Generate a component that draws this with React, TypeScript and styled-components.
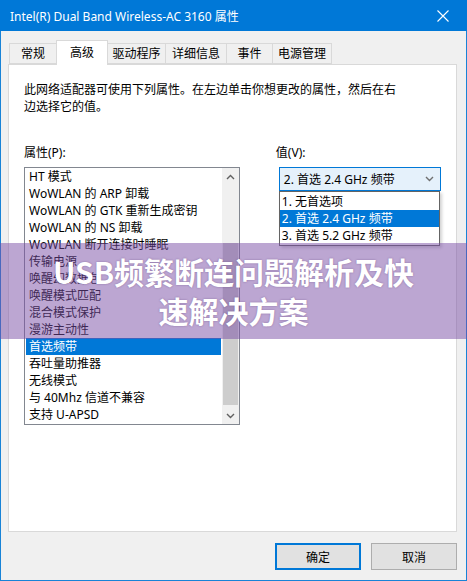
import React from 'react';
import styled, { createGlobalStyle } from 'styled-components';

const GlobalStyle = createGlobalStyle`
  html, body {
    margin: 0;
    padding: 0;
  }
  body {
    width: 467px;
    height: 581px;
    overflow: hidden;
    font-family: 'Noto Sans', 'Noto Sans CJK SC', sans-serif;
    font-size: 12px;
    color: #000;
  }
  * {
    box-sizing: border-box;
  }
`;

const Window = styled.div`
  position: relative;
  width: 467px;
  height: 581px;
  display: flex;
  flex-direction: column;
  border: 1px solid #1883d7;
  border-top: none;
  background: #f0f0f0;
`;

const TitleBar = styled.div`
  height: 31px;
  margin: 0 -1px;
  padding: 0 10px 0 10px;
  display: flex;
  align-items: center;
  justify-content: space-between;
  background: #0078d7;
  color: #fff;
  font-size: 12px;
`;

const CloseButton = styled.div`
  width: 20px;
  height: 20px;
  display: flex;
  align-items: center;
  justify-content: center;
  margin-right: 4px;
`;

const Body = styled.div`
  flex: 1;
  display: flex;
  flex-direction: column;
  padding: 9px 9px 0 7px;
`;

const TabRow = styled.div`
  display: flex;
  align-items: flex-end;
  height: 24px;
  padding-left: 1px;
  position: relative;
  z-index: 1;
`;

const Tab = styled.div<{ active?: boolean; w: number }>`
  width: ${({ w }) => w}px;
  height: ${({ active }) => (active ? 25 : 21)}px;
  margin-left: -1px;
  margin-bottom: ${({ active }) => (active ? -1 : 0)}px;
  border: 1px solid #d9d9d9;
  border-bottom: ${({ active }) => (active ? 'none' : '1px solid #d9d9d9')};
  background: ${({ active }) => (active ? '#fff' : '#f0f0f0')};
  display: flex;
  align-items: ${({ active }) => (active ? 'flex-start' : 'center')};
  padding-top: ${({ active }) => (active ? 3 : 0)}px;
  justify-content: center;
  line-height: 17px;
  &:first-child {
    margin-left: 0;
  }
`;

const Panel = styled.div`
  width: 449px;
  height: 468px;
  background: #fff;
  border: 1px solid #d9d9d9;
  padding: 16px 15px 0 15px;
  display: flex;
  flex-direction: column;
`;

const Description = styled.p`
  margin: 0;
  line-height: 17px;
`;

const Columns = styled.div`
  display: flex;
  margin-top: 29px;
`;

const LeftColumn = styled.div`
  width: 217px;
  display: flex;
  flex-direction: column;
`;

const RightColumn = styled.div`
  margin-left: 36px;
  width: 166px;
  display: flex;
  flex-direction: column;
`;

const FieldLabel = styled.div`
  line-height: 17px;
  height: 17px;
  margin-bottom: 6px;
`;

const ListBox = styled.div`
  height: 258px;
  border: 1px solid #828790;
  display: flex;
`;

const ListItems = styled.div`
  flex: 1;
  display: flex;
  flex-direction: column;
  padding: 0 1px 0 1px;
`;

const ListItem = styled.div<{ selected?: boolean }>`
  height: 17px;
  line-height: 17px;
  padding-left: 3px;
  white-space: nowrap;
  background: ${({ selected }) => (selected ? '#0078d7' : 'transparent')};
  color: ${({ selected }) => (selected ? '#fff' : '#000')};
`;

const ScrollBar = styled.div`
  width: 17px;
  background: #f0f0f0;
  display: flex;
  flex-direction: column;
`;

const ScrollArrow = styled.div`
  height: 17px;
  display: flex;
  align-items: center;
  justify-content: center;
`;

const ScrollTrack = styled.div`
  flex: 1;
  display: flex;
  flex-direction: column;
  justify-content: flex-end;
  padding: 0 1px 2px 1px;
`;

const ScrollThumb = styled.div`
  height: 162px;
  background: #cdcdcd;
`;

const ComboWrap = styled.div`
  position: relative;
  margin-left: 3px;
  width: 162px;
`;

const Combo = styled.div`
  height: 24px;
  border: 1px solid #0078d7;
  background: #e5f1fb;
  display: flex;
  align-items: center;
  justify-content: space-between;
  padding: 0 6px 0 4px;
`;

const DropList = styled.div`
  position: absolute;
  top: 24px;
  left: 0;
  width: 161px;
  background: #fff;
  border: 1px solid #646464;
  box-shadow: 2px 2px 3px rgba(0, 0, 0, 0.18);
  padding: 1px 0 1px 0;
  z-index: 2;
`;

const DropItem = styled.div<{ selected?: boolean }>`
  height: 17px;
  line-height: 17px;
  padding-left: 2px;
  white-space: nowrap;
  background: ${({ selected }) => (selected ? '#0078d7' : 'transparent')};
  color: ${({ selected }) => (selected ? '#fff' : '#000')};
`;

const ButtonRow = styled.div`
  display: flex;
  justify-content: flex-end;
  gap: 10px;
  margin-top: 11px;
  width: 449px;
`;

const Button = styled.div<{ primary?: boolean }>`
  width: 86px;
  height: 27px;
  display: flex;
  align-items: center;
  justify-content: center;
  background: #e1e1e1;
  border: 1px solid ${({ primary }) => (primary ? '#0078d7' : '#adadad')};
  box-shadow: ${({ primary }) => (primary ? 'inset 0 0 0 1px #0078d7' : 'none')};
`;

const Banner = styled.div`
  position: absolute;
  left: -1px;
  right: -1px;
  top: 243px;
  height: 96px;
  background: rgba(122, 78, 165, 0.5);
  display: flex;
  align-items: center;
  justify-content: center;
  z-index: 5;
`;

const BannerText = styled.div`
  color: #fff;
  font-family: 'Noto Sans CJK SC', 'Noto Sans', sans-serif;
  font-weight: 700;
  font-size: 30px;
  line-height: 39px;
  text-align: center;
  text-shadow: 0 0 2px rgba(70, 35, 100, 0.45);
`;

const Chevron: React.FC<{ up?: boolean; color?: string }> = ({ up, color = '#606060' }) => (
  <svg width="9" height="6" viewBox="0 0 9 6">
    <path
      d={up ? 'M1 5 L4.5 1.5 L8 5' : 'M1 1 L4.5 4.5 L8 1'}
      fill="none"
      stroke={color}
      strokeWidth="1.4"
    />
  </svg>
);

const tabs = [
  { label: '常规', w: 48 },
  { label: '高级', w: 52, active: true },
  { label: '驱动程序', w: 59 },
  { label: '详细信息', w: 62 },
  { label: '事件', w: 47 },
  { label: '电源管理', w: 60 },
];

const properties = [
  'HT 模式',
  'WoWLAN 的 ARP 卸载',
  'WoWLAN 的 GTK 重新生成密钥',
  'WoWLAN 的 NS 卸载',
  'WoWLAN 断开连接时睡眠',
  '传输电源',
  '唤醒幻数据包',
  '唤醒模式匹配',
  '混合模式保护',
  '漫游主动性',
  '首选频带',
  '吞吐量助推器',
  '无线模式',
  '与 40Mhz 信道不兼容',
  '支持 U-APSD',
];

const options = ['1. 无首选项', '2. 首选 2.4 GHz 频带', '3. 首选 5.2 GHz 频带'];

const App: React.FC = () => {
  return (
    <>
      <GlobalStyle />
      <Window>
        <TitleBar>
          <span>Intel(R) Dual Band Wireless-AC 3160 属性</span>
          <CloseButton>
            <svg width="12" height="12" viewBox="0 0 12 12">
              <path d="M0.5 0.5 L11.5 11.5 M11.5 0.5 L0.5 11.5" stroke="#fff" strokeWidth="1.1" />
            </svg>
          </CloseButton>
        </TitleBar>
        <Body>
          <TabRow>
            {tabs.map((t) => (
              <Tab key={t.label} w={t.w} active={t.active}>
                {t.label}
              </Tab>
            ))}
          </TabRow>
          <Panel>
            <Description>
              此网络适配器可使用下列属性。在左边单击你想更改的属性，然后在右
              <br />
              边选择它的值。
            </Description>
            <Columns>
              <LeftColumn>
                <FieldLabel>属性(P):</FieldLabel>
                <ListBox>
                  <ListItems>
                    {properties.map((p) => (
                      <ListItem key={p} selected={p === '首选频带'}>
                        {p}
                      </ListItem>
                    ))}
                  </ListItems>
                  <ScrollBar>
                    <ScrollArrow>
                      <Chevron up />
                    </ScrollArrow>
                    <ScrollTrack>
                      <ScrollThumb />
                    </ScrollTrack>
                    <ScrollArrow>
                      <Chevron />
                    </ScrollArrow>
                  </ScrollBar>
                </ListBox>
              </LeftColumn>
              <RightColumn>
                <FieldLabel>值(V):</FieldLabel>
                <ComboWrap>
                  <Combo>
                    <span>2. 首选 2.4 GHz 频带</span>
                    <Chevron color="#707070" />
                  </Combo>
                  <DropList>
                    {options.map((o, i) => (
                      <DropItem key={o} selected={i === 1}>
                        {o}
                      </DropItem>
                    ))}
                  </DropList>
                </ComboWrap>
              </RightColumn>
            </Columns>
          </Panel>
          <ButtonRow>
            <Button primary>确定</Button>
            <Button>取消</Button>
          </ButtonRow>
        </Body>
        <Banner>
          <BannerText>
            USB频繁断连问题解析及快
            <br />
            速解决方案
          </BannerText>
        </Banner>
      </Window>
    </>
  );
};

export default App;
